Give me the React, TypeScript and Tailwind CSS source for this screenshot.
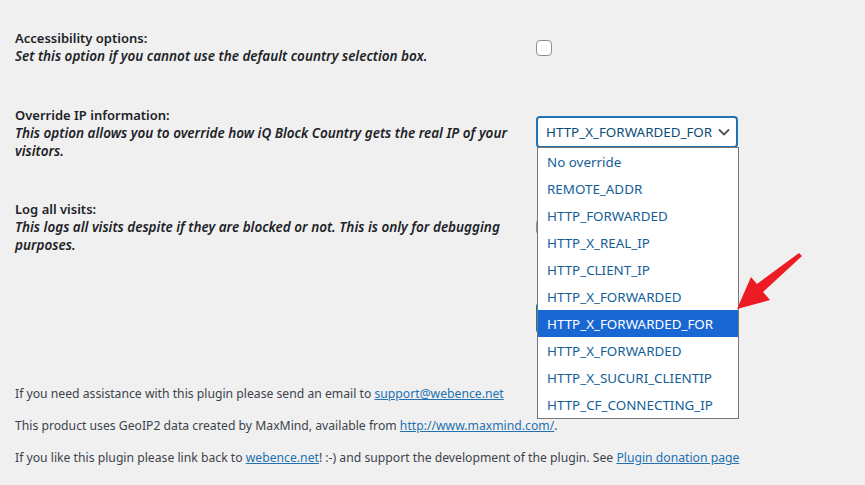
import React from "react";

const options = [
  "No override",
  "REMOTE_ADDR",
  "HTTP_FORWARDED",
  "HTTP_X_REAL_IP",
  "HTTP_CLIENT_IP",
  "HTTP_X_FORWARDED",
  "HTTP_X_FORWARDED_FOR",
  "HTTP_X_FORWARDED",
  "HTTP_X_SUCURI_CLIENTIP",
  "HTTP_CF_CONNECTING_IP",
];

interface SettingRowProps {
  label: string;
  children: React.ReactNode;
  control: React.ReactNode;
  className?: string;
}

function SettingRow({ label, children, control, className }: SettingRowProps) {
  return (
    <div className={`flex ${className ?? ""}`}>
      <div className="w-[521px] shrink-0">
        <div className="text-[13px] font-semibold leading-[18px]">{label}</div>
        <div className="text-[13.5px] font-semibold italic leading-[18px]">{children}</div>
      </div>
      <div>{control}</div>
    </div>
  );
}

function Checkbox({ className }: { className?: string }) {
  return (
    <div
      className={`h-[16px] w-[16px] rounded-[4px] border border-[#8c8f94] bg-white ${className ?? ""}`}
    ></div>
  );
}

export default function App() {
  return (
    <div className="relative min-h-[485px] bg-[#f0f0f1] px-[15px] pt-[29px] font-['Noto_Sans',sans-serif] text-[#1d2327]">
      <SettingRow
        label="Accessibility options:"
        className="mb-[41px]"
        control={<Checkbox className="mt-[11px]" />}
      >
        Set this option if you cannot use the default country selection box.
      </SettingRow>

      <SettingRow
        label="Override IP information:"
        className="mb-[40px]"
        control={
          <div className="mt-[10px] flex h-[32px] w-[202px] items-center justify-between rounded-[4px] border-2 border-[#2271b1] bg-white pl-[8px] pr-[4px] text-[13.4px] text-[#0a4b78]">
            <span>HTTP_X_FORWARDED_FOR</span>
            <svg width="16" height="16" viewBox="0 0 16 16" fill="none">
              <polyline
                points="3.5,6 8,10.5 12.5,6"
                stroke="#50575e"
                strokeWidth="1.8"
                strokeLinecap="round"
                strokeLinejoin="round"
              />
            </svg>
          </div>
        }
      >
        This option allows you to override how iQ Block Country gets the real IP of your
        <br />
        visitors.
      </SettingRow>

      <SettingRow label="Log all visits:" control={<Checkbox className="mt-[19px]" />}>
        This logs all visits despite if they are blocked or not. This is only for debugging
        <br />
        purposes.
      </SettingRow>

      <div className="mt-[49px] flex">
        <div className="w-[521px] shrink-0"></div>
        <div className="h-[30px] w-[110px] rounded-[3px] border border-[#2271b1] bg-[#2271b1]"></div>
      </div>

      <div className="mt-[51px] text-[12.2px] leading-[19px] text-[#3c434a]">
        <p className="mb-[13px]">
          If you need assistance with this plugin please send an email to{" "}
          <a className="text-[#2271b1] underline">support@webence.net</a>
        </p>
        <p className="mb-[13px]">
          This product uses GeoIP2 data created by MaxMind, available from{" "}
          <a className="text-[#2271b1] underline">http://www.maxmind.com/</a>.
        </p>
        <p>
          If you like this plugin please link back to{" "}
          <a className="text-[#2271b1] underline">webence.net</a>! :-) and support the development
          of the plugin. See <a className="text-[#2271b1] underline">Plugin donation page</a>
        </p>
      </div>

      <ul className="absolute left-[537px] top-[147px] w-[202px] border border-[#767676] bg-white text-[13.4px] text-[#135e96]">
        {options.map((opt, i) => (
          <li
            key={i}
            className={`flex h-[27px] items-center pl-[9px] pt-[2px] ${
              i === 6 ? "bg-[#1967d2] text-white" : ""
            }`}
          >
            {opt}
          </li>
        ))}
      </ul>

      <svg
        className="absolute left-0 top-0"
        width="865"
        height="485"
        viewBox="0 0 865 485"
        style={{ pointerEvents: "none" }}
      >
        <polygon
          points="737,309 751,277 757,284 799,253 802,256 763,292 770,300"
          fill="#ed1c24"
        />
      </svg>
    </div>
  );
}
